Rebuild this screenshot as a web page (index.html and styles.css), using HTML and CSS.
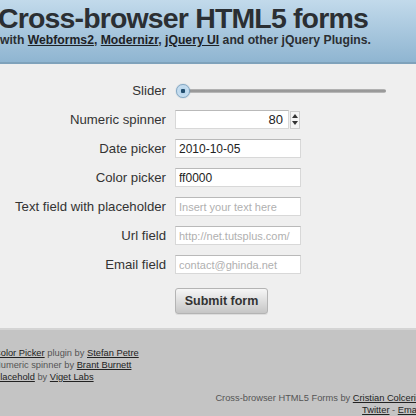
FILE: index.html
```html
<!DOCTYPE html>
<html>
<head>
<meta charset="utf-8">
<link rel="stylesheet" href="styles.css">
</head>
<body>
<header class="header">
  <h1 class="title">Cross-browser HTML5 forms</h1>
  <p class="subtitle">with <a href="#">Webforms2</a>, <a href="#">Modernizr</a>, <a href="#">jQuery UI</a> and other jQuery Plugins.</p>
</header>
<main class="main">
  <form class="form">
    <label class="lbl">Slider</label>
    <div class="slider"><span class="handle"></span></div>
    <label class="lbl">Numeric spinner</label>
    <div class="spin-wrap"><input class="field num" value="80"><span class="spin"><span class="up"></span><span class="down"></span></span></div>
    <label class="lbl">Date picker</label>
    <input class="field" value="2010-10-05">
    <label class="lbl">Color picker</label>
    <input class="field" value="ff0000">
    <label class="lbl">Text field with placeholder</label>
    <input class="field" placeholder="Insert your text here">
    <label class="lbl">Url field</label>
    <input class="field" placeholder="http://net.tutsplus.com/">
    <label class="lbl">Email field</label>
    <input class="field" placeholder="contact@ghinda.net">
    <span></span>
    <button class="btn" type="button">Submit form</button>
  </form>
</main>
<footer class="footer">
  <div class="credits">
    <p><a href="#">Color Picker</a> plugin by <a href="#">Stefan Petre</a></p>
    <p>Numeric spinner by <a href="#">Brant Burnett</a></p>
    <p><a href="#">Placehold</a> by <a href="#">Viget Labs</a></p>
  </div>
  <div class="author">
    <p>Cross-browser HTML5 Forms by <a href="#">Cristian Colceriu</a></p>
    <p><a href="#">Twitter</a> - <a href="#">Email</a></p>
  </div>
</footer>
</body>
</html>
```
FILE: styles.css
```css
* { box-sizing: border-box; }
html, body { margin: 0; padding: 0; }
body {
  width: 416px;
  height: 416px;
  overflow: hidden;
  font-family: "Liberation Sans", Arial, sans-serif;
  background: #efefef;
  color: #333;
}
a { color: #222; }
p { margin: 0; }

.header {
  height: 64px;
  background: linear-gradient(#c2daeb, #8fb5d1);
  border-bottom: 2px solid #7fa2bb;
  padding: 3px 0 0 0;
  margin-left: -2px;
  width: 460px;
  white-space: nowrap;
}
.title {
  margin: 0;
  font-size: 28.5px;
  line-height: 30px;
  font-weight: bold;
  color: #2b2f33;
  letter-spacing: -0.85px;
}
.subtitle {
  font-size: 12.2px;
  font-weight: bold;
  color: #2b2f33;
  line-height: 14px;
  margin: 0 0 0 2px;
}
.subtitle a { color: #1e2226; }

.main {
  padding: 12px 0 18px 0;
  height: 266px;
  border-bottom: 2px solid #d4d4d4;
}
.form {
  display: grid;
  grid-template-columns: 166px 241px;
  grid-auto-rows: 29px;
  column-gap: 9px;
  align-items: center;
}
.lbl {
  text-align: right;
  font-size: 13.2px;
  color: #333;
}
.field {
  width: 126px;
  height: 19px;
  border: 1px solid #d8d8d8;
  border-top-color: #b9b9b9;
  background: #fff;
  font-family: "Liberation Sans", Arial, sans-serif;
  font-size: 12px;
  color: #222;
  padding: 1px 3px;
  margin: 0;
  outline: none;
}
.field::placeholder { color: #b0b0b0; font-size: 11px; }

.slider {
  position: relative;
  width: 211px;
  height: 14px;
  display: flex;
  align-items: center;
}
.slider::before {
  content: "";
  display: block;
  margin-left: 7px;
  flex: 1;
  height: 4px;
  border-radius: 2px;
  background: linear-gradient(#bdbdbd, #8c8c8c 50%, #c4c4c4);
}
.handle {
  position: absolute;
  left: 1px;
  top: 0;
  width: 14px;
  height: 14px;
  border-radius: 50%;
  border: 1px solid #7fa6c4;
  background: radial-gradient(circle, #234e6e 0 2px, #b9d6ec 2.5px, #d7e8f5 100%);
  box-shadow: 0 0 1px #5f88a8;
}

.spin-wrap {
  display: flex;
  align-items: center;
  gap: 1px;
}
.num {
  width: 114px;
  text-align: right;
  padding-right: 5px;
  font-size: 13px;
}
.spin {
  display: flex;
  flex-direction: column;
  justify-content: center;
  gap: 3px;
  width: 10px;
  height: 18px;
  border: 1px solid #ccc;
  background: #f4f4f4;
  align-items: center;
}
.up, .down {
  width: 0;
  height: 0;
  border-left: 3px solid transparent;
  border-right: 3px solid transparent;
}
.up { border-bottom: 4px solid #333; }
.down { border-top: 4px solid #333; }

.btn {
  margin-top: 14px;
  width: 93px;
  height: 26px;
  border: 1px solid #b4b4b4;
  border-radius: 3px;
  background: linear-gradient(#f6f6f6, #c6c6c6);
  font-family: "Liberation Sans", Arial, sans-serif;
  font-weight: bold;
  font-size: 12.5px;
  color: #333;
  padding: 0;
  box-shadow: 0 1px 0 #ddd;
}

.footer {
  background: #c4c4c4;
  height: 86px;
  padding-top: 17px;
  font-size: 9.3px;
  line-height: 12px;
  color: #555;
}
.credits {
  margin-left: -6px;
  white-space: nowrap;
}
.credits a, .author a { color: #222; }
.author {
  margin-top: 9px;
  margin-right: -5px;
  text-align: right;
  white-space: nowrap;
}
```
